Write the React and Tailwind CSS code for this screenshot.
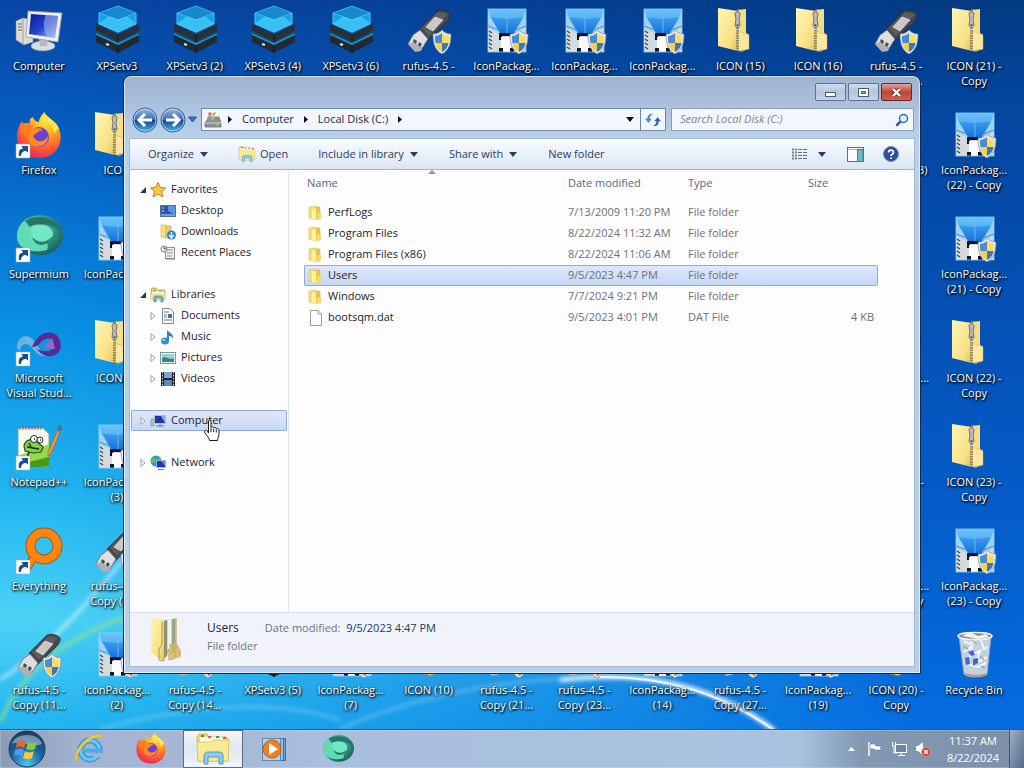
import React, { useState } from 'react';

// Gradients used by more than one icon
const SharedDefs = () => (
  <svg className="absolute size-0" aria-hidden="true">
    <defs>
      <linearGradient id="folder" x1="0" y1="0" x2="1" y2="1">
        <stop offset="0" stopColor="#fff6b4" />
        <stop offset="0.7" stopColor="#f8e186" />
        <stop offset="1" stopColor="#e2ba50" />
      </linearGradient>
      <linearGradient id="package" x1="0" y1="0" x2="0" y2="1">
        <stop offset="0" stopColor="#4fb6f8" />
        <stop offset="1" stopColor="#1672da" />
      </linearGradient>
      <radialGradient id="globe" cx="0.4" cy="0.35" r="0.7">
        <stop offset="0" stopColor="#8ff0d0" />
        <stop offset="0.5" stopColor="#2fa58e" />
        <stop offset="1" stopColor="#1d5a52" />
      </radialGradient>
      <radialGradient id="fox" cx="0.65" cy="0.15" r="0.95">
        <stop offset="0" stopColor="#fff04a" />
        <stop offset="0.4" stopColor="#ffa01e" />
        <stop offset="0.75" stopColor="#fb4a3c" />
        <stop offset="1" stopColor="#e0206a" />
      </radialGradient>
      <linearGradient id="navButton" x1="0" y1="0" x2="0" y2="1">
        <stop offset="0" stopColor="#9dbbe6" />
        <stop offset="0.48" stopColor="#3e6db5" />
        <stop offset="0.5" stopColor="#143f8e" />
        <stop offset="1" stopColor="#3fc0f0" />
      </linearGradient>
      <linearGradient id="screen" x1="0" y1="0" x2="1" y2="1">
        <stop offset="0" stopColor="#0a1c9c" />
        <stop offset="0.5" stopColor="#2440c8" />
        <stop offset="1" stopColor="#b4c8f8" />
      </linearGradient>
    </defs>
  </svg>
);

const Wallpaper = () => (
  <svg className="absolute inset-0 h-full w-full" viewBox="0 0 1024 729" preserveAspectRatio="none" aria-hidden="true">
    <defs>
      <linearGradient id="wallLeft" x1="0" y1="0" x2="0" y2="1">
        <stop offset="0" stopColor="#0845a4" />
        <stop offset="0.2" stopColor="#0660c2" />
        <stop offset="0.45" stopColor="#0a90e4" />
        <stop offset="0.68" stopColor="#22b6f0" />
        <stop offset="0.85" stopColor="#4cd2f6" />
        <stop offset="1" stopColor="#22b4f0" />
      </linearGradient>
      <linearGradient id="wallRight" x1="0" y1="0" x2="0" y2="1">
        <stop offset="0" stopColor="#033a82" />
        <stop offset="0.15" stopColor="#0446a0" />
        <stop offset="0.6" stopColor="#0458c2" />
        <stop offset="1" stopColor="#046ce0" />
      </linearGradient>
      <linearGradient id="fade" x1="0" y1="0" x2="1" y2="0">
        <stop offset="0.05" stopColor="#000" />
        <stop offset="0.5" stopColor="#777" />
        <stop offset="0.9" stopColor="#fff" />
      </linearGradient>
      <mask id="fadeMask">
        <rect width="1024" height="729" fill="url(#fade)" />
      </mask>
      <filter id="glow" x="-10%" y="-50%" width="120%" height="200%">
        <feGaussianBlur stdDeviation="2" />
      </filter>
    </defs>
    <rect width="1024" height="729" fill="url(#wallLeft)" />
    <rect width="1024" height="729" fill="url(#wallRight)" mask="url(#fadeMask)" />
    <g fill="none" filter="url(#glow)">
      <path d="M0 680Q60 640 126 556" stroke="#fff" strokeOpacity="0.6" strokeWidth="3" />
      <path d="M0 722Q30 650 126 617" stroke="#9be87c" strokeOpacity="0.8" strokeWidth="3" />
      <path d="M100 729Q250 690 340 720" stroke="#fff" strokeOpacity="0.25" strokeWidth="3" />
      <path d="M340 729Q450 680 600 677" stroke="#fff" strokeOpacity="0.4" strokeWidth="2" />
      <path d="M560 680Q690 664 775 731" stroke="#fff" strokeWidth="4" />
    </g>
    <path d="M600 677Q700 676 775 731" fill="none" stroke="#fff" strokeWidth="2" strokeOpacity="0.8" />
  </svg>
);

const Shield = () => (
  <g>
    <path d="M37 22C34 25 31 26 28 26C28 36 30 42 37 46C44 42 46 36 46 26C43 26 40 25 37 22Z" fill="#e4e8ee" stroke="#7c8894" strokeWidth="0.7" />
    <path d="M37 25C35 27 32 28 30 28C30 30 30 32 30.500 35H37Z" fill="#4a8ad0" />
    <path d="M37 25C39 27 42 28 44 28C44 30 44 32 43.500 35H37Z" fill="#fbdc62" />
    <path d="M30.500 35C31 39 33 42 37 44V35Z" fill="#fbcb40" />
    <path d="M43.500 35C43 39 41 42 37 44V35Z" fill="#3a78bc" />
  </g>
);

const Shortcut = () => (
  <g>
    <rect x="1" y="32" width="14" height="14" fill="#fff" stroke="#9aa8b8" strokeWidth="0.6" />
    <path d="M4 44C3 39 5 37 8 36.500L6.500 34H13V40.500L11 39C8 39 6 41 6 44Z" fill="#1c4d94" />
  </g>
);

const Fox = () => (
  <g>
    <path d="M2 24C2 18 4 13 7 9L9 14C11 12 13 11 15 11C14 8 15 6 18 5C19 8 21 10 24 10C24 6 27 3 29 0C31 6 40 9 44 17C49 29 43 45 25 46C10 46 2 36 2 24Z" fill="url(#fox)" />
    <circle cx="24" cy="25" r="10" fill="#7040d0" />
    <path d="M14 20C17 15 26 15 28 18C24 18 23 21 20 22C18 23 18 25 20 27C25 32 31 28 33 24C34 36 16 38 13 28Z" fill="#ff8a20" />
    <path d="M6 13C9 9 15 12 20 14C15 16 15 20 12 25C8 24 5 19 6 13Z" fill="#ff7f1c" />
    <path d="M29 0C28 7 38 10 39 22C42 16 44 17 44 17C42 9 32 6 29 0Z" fill="#ffe84a" />
  </g>
);

const Supermium = () => (
  <g>
    <ellipse cx="25" cy="19" rx="23" ry="20" fill="url(#globe)" />
    <path d="M2 22C1 10 10 3 14 3C10 12 18 22 27 24C32 26 34 28 32 34C15 38 3 32 2 22Z" fill="#5fdcb4" />
    <path d="M10 5C22 -3 43 1 48 17C38 8 22 6 15 11Z" fill="#2a7467" />
    <ellipse cx="27" cy="18" rx="11" ry="9" fill="#74e8c4" />
    <path d="M17 21Q27 31 38 20Q33 29 26 29Q19 28 17 21Z" fill="#27806f" />
  </g>
);

const DesktopIcon = ({ type }) => {
  const svgProps = { className: 'size-12 shrink-0 overflow-visible', viewBox: '0 0 48 48', 'aria-hidden': true };

  if (type === 'computer') {
    return (
      <svg {...svgProps}>
        <path d="M1 13L8 10L18 12V34L9 37L1 32Z" fill="#dcdcd8" stroke="#8c8c88" strokeWidth="0.6" />
        <path d="M8 10V36" stroke="#a0a09c" />
        <path d="M3 16H7M3 19H7M3 22H7" stroke="#6a6a6a" />
        <ellipse cx="28" cy="38" rx="12" ry="5" fill="#d8dbe0" stroke="#8c939c" strokeWidth="0.6" />
        <path d="M24 30H33L32 38H25Z" fill="#b4b9c2" />
        <path d="M13 3L47 5L43 34L11 29Z" fill="#f0f1ee" stroke="#94989c" strokeWidth="0.8" />
        <path d="M16 6L43 8L40 30L14 26Z" fill="url(#screen)" />
        <path d="M31 7L43 8L40 30L32 29C28 20 28 14 31 7Z" fill="#a5b8f4" fillOpacity="0.55" />
      </svg>
    );
  }
  if (type === 'xpset') {
    return (
      <svg {...svgProps}>
        <path d="M3 16L25 26L46 16V23L25 34L3 23Z" fill="#27313b" />
        <path d="M3 27L25 37L46 27V34L25 45L3 34Z" fill="#202a34" />
        <path d="M3 23L25 34L46 23V26L25 37L3 26Z" fill="#17506e" />
        <path d="M3 26L25 36L46 26" fill="none" stroke="#22a4d4" strokeWidth="1.2" />
        <path d="M25 26V34M25 38V45" stroke="#0e161e" />
        <path d="M6 5L25 -2L43 5V16L25 25L6 16Z" fill="#17a2e6" />
        <path d="M6 5L25 -2L43 5L25 12Z" fill="#1688cc" stroke="#3cc0ee" strokeWidth="0.8" />
        <path d="M6 16L16 9L25 12L34 9L43 16L25 24Z" fill="#38c0f6" stroke="#62d4f8" strokeWidth="0.6" />
        <path d="M6 5V16M43 5V16" stroke="#48c8f4" strokeWidth="1" />
        <path d="M13 36L16 37" stroke="#d8e8ee" strokeWidth="2" />
      </svg>
    );
  }
  if (type === 'rufus') {
    return (
      <svg {...svgProps}>
        <path d="M14 21L32 3C37 1 42 3 45 6C46 9 43 13 40 16L20 35Z" fill="#45474c" stroke="#292b2f" strokeWidth="0.8" />
        <path d="M17 20L33 4L43 6L24 28Z" fill="#5a5c61" />
        <path d="M21 19L30 9L38 12L28 23Z" fill="#c9c8c4" stroke="#f2f2f0" strokeWidth="0.6" />
        <path d="M8 27L15 22L23 31L16 42L10 42L3 36Z" fill="#dedfe0" stroke="#696b70" strokeWidth="0.8" />
        <path d="M3 36L8 34L17 39L16 43L10 44Z" fill="#aeb2b6" />
        <path d="M9 31L12 33L11 36L8 34ZM14 34L17 36L15 39L13 37Z" fill="#484b52" />
        <Shield />
      </svg>
    );
  }
  if (type === 'package') {
    return (
      <svg {...svgProps}>
        <rect x="6" y="1" width="38" height="43" fill="#d5dade" />
        <path d="M6 1H44V20L33 26H18L6 20Z" fill="#9ed2f8" />
        <path d="M6 1H44L41 10L32 25H18L9 10Z" fill="url(#package)" />
        <path d="M6 1H44V9L25 11L6 9Z" fill="#8fd4fc" fillOpacity="0.4" />
        <path d="M25 2V25" stroke="#6fc0f6" strokeWidth="0.8" />
        <path d="M6 18L17 22M44 18L33 22" stroke="#5a88b4" strokeWidth="1" />
        <path d="M17 25H33V32H29V28H20V32H17Z" fill="#0c1420" />
        <path d="M19 29H29V44H19Z" fill="#fbfbfb" />
        <path d="M17 40H21V44H17ZM28 40H32V44H28Z" fill="#121922" />
        <path d="M7 23L10 25M7 27L10 29M7 31L10 33M7 35L10 37M7 39L10 41" stroke="#3c444c" strokeWidth="1.3" />
        <rect x="6" y="1" width="38" height="43" fill="none" stroke="#8fd0f6" strokeWidth="0.8" />
        <Shield />
      </svg>
    );
  }
  if (type === 'zip') {
    return (
      <svg {...svgProps}>
        <path d="M4 38L26 44L32 41V26L29 24V3L22 1Z" fill="#d9b860" fillOpacity="0.7" />
        <path d="M2 0L22 3V43L2 38Z" fill="url(#folder)" />
        <path d="M22 2L30 1V25L33 27V41L22 43Z" fill="#f6de86" />
        <path d="M22 23L33 27V41L22 43Z" fill="#fbe8a0" stroke="#d6ac40" strokeWidth="0.5" />
        <path d="M21.500 2V43" stroke="#8a8468" strokeWidth="3" strokeDasharray="1.500 1" />
        <path d="M19 6C19 3 24 3 24 6L23 11L24 17C24 20 19 20 19 17L20 11Z" fill="#b9bcc0" stroke="#54575c" strokeWidth="0.8" />
        <circle cx="21.500" cy="17" r="1" fill="#4b4e54" />
      </svg>
    );
  }
  if (type === 'firefox') {
    return (
      <svg {...svgProps}>
        <Fox />
        <Shortcut />
      </svg>
    );
  }
  if (type === 'supermium') {
    return (
      <svg {...svgProps}>
        <Supermium />
        <Shortcut />
      </svg>
    );
  }
  if (type === 'visualstudio') {
    return (
      <svg {...svgProps}>
        <path d="M2 25C4 15 14 13 20 22C26 32 30 35 36 34C26 39 22 34 18 29C13 22 6 22 5 31C3 30 1 28 2 25Z" fill="#6eb2e0" />
        <path d="M17 27C22 15 30 11 38 13C47 16 49 31 40 35C33 38 26 35 22 29C28 32 38 33 39 25C39 17 30 17 26 22C23 26 20 27 17 27Z" fill="#5a2a94" />
        <path d="M27 28L37 18L40 29Z" fill="#8b6cc4" />
        <Shortcut />
      </svg>
    );
  }
  if (type === 'notepad') {
    return (
      <svg {...svgProps}>
        <path d="M3 4H28L34 10V42L3 45Z" fill="#f6f8f4" stroke="#8c9484" strokeWidth="0.8" />
        <path d="M3 32L34 20V42L3 45Z" fill="#9ad848" />
        <path d="M14 38L34 33V42L14 44Z" fill="#429a1c" />
        <path d="M5 2V6M8 2V6M11 2V6M14 2V6M17 2V6M20 2V6M23 2V6M26 2V6" stroke="#6a6f68" strokeWidth="1" />
        <path d="M9 22C10 16 16 14 21 17L28 23L26 28L18 29L10 27Z" fill="#84d048" stroke="#25521a" strokeWidth="1.2" />
        <circle cx="19" cy="15" r="3.500" fill="#fff" stroke="#222" />
        <circle cx="25" cy="16" r="3" fill="#fff" stroke="#222" />
        <path d="M19 15H20M25 16H26M12 23L24 25M14 19L16 23M14 28L12 34" stroke="#1e2c16" strokeWidth="1.5" />
        <path d="M45 1L47 3L36 30L33 32L33 28Z" fill="#ec9b3c" stroke="#8c5a24" strokeWidth="0.6" />
        <path d="M44 1L47 3L45 8L42 6Z" fill="#556c90" />
        <Shortcut />
      </svg>
    );
  }
  if (type === 'everything') {
    return (
      <svg {...svgProps}>
        <path d="M12 40L19 29" stroke="#9c5010" strokeWidth="8" strokeLinecap="round" />
        <circle cx="29" cy="18" r="13.500" fill="none" stroke="#a45a18" strokeWidth="10" />
        <circle cx="29" cy="18" r="13.500" fill="none" stroke="#ff8410" strokeWidth="8" />
        <path d="M13 39L18 31" stroke="#ff8410" strokeWidth="6" />
        <Shortcut />
      </svg>
    );
  }
  return (
    <svg {...svgProps}>
      <path d="M9 4L41 4L37 42C33 46 17 46 14 42Z" fill="#d3dae1" fillOpacity="0.92" stroke="#a8b2bb" strokeWidth="0.8" />
      <path d="M14 20L22 14L20 24L30 19L26 31L37 25M17 32L28 35L36 31M31 8L34 17L38 15M14 9L20 12L27 6" fill="none" stroke="#f4f6f8" strokeWidth="2" />
      <path d="M13 14L18 17M30 24L34 28M22 8L27 12M31 34L35 36" stroke="#a2acb5" strokeWidth="1.5" />
      <ellipse cx="25" cy="4" rx="17" ry="3.500" fill="#7d8993" stroke="#eef2f5" strokeWidth="1.5" />
      <path d="M12 4L20 0L28 4L36 2L39 5L28 7Z" fill="#f2f0ea" />
      <path d="M18 20L23 18L25 23L21 24ZM15 26L19 25L20 32L16 33ZM23 27L28 26L28 31L23 34Z" fill="#4765c8" />
      <path d="M15 42Q25 46 37 42" fill="none" stroke="#b49a82" strokeWidth="2" />
    </svg>
  );
};

const firstColumn = [
  { type: 'computer', lines: ['Computer'] },
  { type: 'firefox', lines: ['Firefox'] },
  { type: 'supermium', lines: ['Supermium'] },
  { type: 'visualstudio', lines: ['Microsoft', 'Visual Stud...'] },
  { type: 'notepad', lines: ['Notepad++'] },
  { type: 'everything', lines: ['Everything'] },
  { type: 'rufus', lines: ['rufus-4.5 -', 'Copy (11...'] },
];

const secondColumn = [
  { type: 'xpset', lines: ['XPSetv3'] },
  { type: 'zip', lines: ['ICON'] },
  { type: 'package', lines: ['IconPackag...'] },
  { type: 'zip', lines: ['ICON (2)'] },
  { type: 'package', lines: ['IconPackag...', '(3)'] },
  { type: 'rufus', lines: ['rufus-4.5 -', 'Copy (10...'] },
  { type: 'package', lines: ['IconPackag...', '(2)'] },
];

// Columns whose middle rows are empty: one icon on top and one at the bottom
const middleColumns = [
  [{ type: 'xpset', lines: ['XPSetv3 (2)'] }, { type: 'rufus', lines: ['rufus-4.5 -', 'Copy (14...'] }],
  [{ type: 'xpset', lines: ['XPSetv3 (4)'] }, { type: 'xpset', lines: ['XPSetv3 (5)'] }],
  [{ type: 'xpset', lines: ['XPSetv3 (6)'] }, { type: 'package', lines: ['IconPackag...', '(7)'] }],
  [{ type: 'rufus', lines: ['rufus-4.5 -'] }, { type: 'zip', lines: ['ICON (10)'] }],
  [{ type: 'package', lines: ['IconPackag...'] }, { type: 'rufus', lines: ['rufus-4.5 -', 'Copy (21...'] }],
  [{ type: 'package', lines: ['IconPackag...'] }, { type: 'rufus', lines: ['rufus-4.5 -', 'Copy (23...'] }],
  [{ type: 'package', lines: ['IconPackag...'] }, { type: 'package', lines: ['IconPackag...', '(14)'] }],
  [{ type: 'zip', lines: ['ICON (15)'] }, { type: 'rufus', lines: ['rufus-4.5 -', 'Copy (27...'] }],
  [{ type: 'zip', lines: ['ICON (16)'] }, { type: 'package', lines: ['IconPackag...', '(19)'] }],
];

const twelfthColumn = [
  { type: 'rufus', lines: ['rufus-4.5 -', 'Copy (29...'] },
  { type: 'xpset', lines: ['XPSetv3 (13)'] },
  null,
  { type: 'package', lines: ['IconPackag...'] },
  { type: 'zip', lines: ['ICON (19) -', 'Copy'] },
  { type: 'package', lines: ['IconPackag...', '(20) - Copy'] },
  { type: 'zip', lines: ['ICON (20) -', 'Copy'] },
];

const lastColumn = [
  { type: 'zip', lines: ['ICON (21) -', 'Copy'] },
  { type: 'package', lines: ['IconPackag...', '(22) - Copy'] },
  { type: 'package', lines: ['IconPackag...', '(21) - Copy'] },
  { type: 'zip', lines: ['ICON (22) -', 'Copy'] },
  { type: 'zip', lines: ['ICON (23) -', 'Copy'] },
  { type: 'package', lines: ['IconPackag...', '(23) - Copy'] },
  { type: 'recycle', lines: ['Recycle Bin'] },
];

const desktopColumns = [
  firstColumn,
  secondColumn,
  ...middleColumns.map(([top, bottom]) => [top, null, null, null, null, null, bottom]),
  twelfthColumn,
  lastColumn,
];

const Desktop = () => (
  <div className="relative grid grid-cols-13 pr-[11px]">
    {desktopColumns.map((column, i) => (
      <div key={i} className="flex min-w-0 flex-col">
        {column.map((item, j) => (
          <div key={j} className="flex h-[104px] flex-col items-center gap-0.5 pt-2">
            {item && (
              <>
                <DesktopIcon type={item.type} />
                <span className="text-center leading-[15px] whitespace-nowrap text-white [text-shadow:1px_1px_2px_#000,0_1px_3px_#000]">
                  {item.lines.map((line) => (
                    <span key={line} className="block">{line}</span>
                  ))}
                </span>
              </>
            )}
          </div>
        ))}
      </div>
    ))}
  </div>
);

const SmallFolder = () => (
  <svg className="size-4" viewBox="0 0 16 16" aria-hidden="true">
    <path d="M1 2L8 1V15L1 13Z" fill="#f5e06c" stroke="#dcc058" strokeWidth="0.6" />
    <path d="M8 2H12V14H8Z" fill="#e6c850" stroke="#cfae44" strokeWidth="0.5" />
    <path d="M4 4L8 3V15L4 14Z" fill="#fdf2a4" />
    <path d="M9 8H13V14L8 15Z" fill="#f2da6c" />
  </svg>
);

const FileIcon = () => (
  <svg className="size-4" viewBox="0 0 16 16" aria-hidden="true">
    <path d="M2.500 0.500H10L13.500 4V15.500H2.500Z" fill="#fdfdfd" stroke="#a0a0a0" />
    <path d="M10 0.500V4H13.500" fill="#eee" stroke="#a0a0a0" />
  </svg>
);

const ExplorerIcon = ({ className }) => (
  <svg className={className} viewBox="0 0 36 32" aria-hidden="true">
    <path d="M2 4L4 1H12L14 4H31L33 6V28H3Z" fill="#f0d878" stroke="#cda848" strokeWidth="0.8" />
    <path d="M5 4H31V10H5Z" fill="#fafbf0" />
    <path d="M6 3H9M21 4H24" stroke="#36a052" strokeWidth="2" />
    <path d="M13 4H16M28 5H31" stroke="#e0523a" strokeWidth="2" />
    <path d="M2 9H16L18 7H34L33 28H3Z" fill="#f8eb94" stroke="#d8b858" strokeWidth="0.6" />
    <path d="M9 31V23C9 20 11 19 13 19H24C27 19 28 20 28 23V31H24V24H13V31Z" fill="#8cccf0" stroke="#3f86bc" strokeWidth="0.8" />
  </svg>
);

const navIcons = {
  star: <path d="M8 0.500L10.300 5.500L15.500 6L11.500 9.500L13 15L8 12L3 15L4.500 9.500L0.500 6L5.700 5.500Z" fill="#ffc93c" stroke="#cf7d18" />,
  desktop: (
    <>
      <rect x="0.500" y="2.500" width="15" height="11" fill="#2258b4" stroke="#54709c" />
      <path d="M8 3L15 3V12L8 8Z" fill="#5b94dc" />
      <path d="M2 5H4M2 8H4M1 12H15" stroke="#c8dcf4" />
    </>
  ),
  downloads: (
    <>
      <path d="M1 1H6V14L1 13Z" fill="#f7e28a" stroke="#d0ac48" strokeWidth="0.6" />
      <path d="M6 2H11V14H6Z" fill="#efcf68" stroke="#d0ac48" strokeWidth="0.6" />
      <circle cx="11.500" cy="11" r="4.500" fill="#2d7fd0" />
      <path d="M11.500 8V13M9 11L11.500 14L14 11" fill="none" stroke="#d5efff" strokeWidth="1.5" />
    </>
  ),
  recent: (
    <>
      <rect x="5.500" y="2.500" width="9" height="11" fill="#eef0f2" stroke="#8b9096" />
      <path d="M7 5H13M7 8H13M7 11H12" stroke="#8b9096" />
      <circle cx="4" cy="4" r="3" fill="#f4f4f4" stroke="#7a8088" />
      <path d="M4 2V4H6M6 14H15" stroke="#7a8088" />
    </>
  ),
  libraries: (
    <>
      <path d="M1 3L2 1H6L7 3H15V13H1Z" fill="#e8cc68" stroke="#b89a48" strokeWidth="0.7" />
      <path d="M2 4H14V7H2Z" fill="#e9f4e6" />
      <path d="M3 4H6M9 4H12" stroke="#5cb06c" />
      <path d="M1 7H15V13H1Z" fill="#f3df90" />
      <path d="M4 15V11C4 9 5 9 6 9H11C12 9 13 10 13 11V15H11V11H6V15Z" fill="#70b8e4" stroke="#3a7cae" strokeWidth="0.6" />
    </>
  ),
  documents: (
    <>
      <path d="M2.500 0.500H10L13.500 4V15.500H2.500Z" fill="#fdfdfd" stroke="#7f8790" />
      <path d="M4 4H9M4 7H7M4 9H7M4 12H12" stroke="#5f7894" />
      <rect x="8" y="6" width="4" height="4" fill="#4c6c94" />
    </>
  ),
  music: (
    <>
      <ellipse cx="5" cy="12" rx="4" ry="3.500" fill="#2a94d8" />
      <path d="M7 1C9 4 14 4 13 10C12 7 10 7 9 7V12H7Z" fill="#2f86c4" />
      <ellipse cx="4" cy="11" rx="1.500" ry="1" fill="#a6dcf8" />
    </>
  ),
  pictures: (
    <>
      <rect x="0.500" y="2.500" width="15" height="11" fill="#f6f8f8" stroke="#84909a" />
      <path d="M2 4H14V12H2Z" fill="#8fd4dc" />
      <path d="M2 8C6 5 9 11 14 8V12H2Z" fill="#32867c" />
    </>
  ),
  videos: (
    <>
      <rect x="1" y="1" width="14" height="14" fill="#20252d" />
      <rect x="4" y="1" width="8" height="6" fill="#7ba6d4" />
      <rect x="4" y="9" width="8" height="6" fill="#5d88bc" />
      <path d="M2.500 1V15M13.500 1V15" stroke="#d8dde4" strokeDasharray="1.500 1.500" />
    </>
  ),
  computer: (
    <>
      <path d="M1 6H4V13H1Z" fill="#b7c6ae" stroke="#76856c" strokeWidth="0.5" />
      <rect x="4.500" y="2.500" width="11" height="8" fill="#1c34a8" stroke="#b6bcc8" />
      <path d="M11 3H15V10Z" fill="#8ea4ec" />
      <path d="M6 13H14M10 11V13" stroke="#8a93a2" strokeWidth="1.500" />
    </>
  ),
  network: (
    <>
      <circle cx="6" cy="6" r="5.500" fill="#2b9ccc" />
      <path d="M3 2C6 3 7 5 5 7S2 8 1 6ZM8 1L11 4L9 6Z" fill="#4cc47c" />
      <rect x="6.500" y="5.500" width="9" height="7" fill="#1c34b8" stroke="#a8b2cc" />
      <path d="M11 6H15V11Z" fill="#6c86e4" />
      <path d="M8 14.500H14" stroke="#7a86a0" />
    </>
  ),
};

const NavIcon = ({ name }) => (
  <svg className="size-4 shrink-0" viewBox="0 0 16 16" aria-hidden="true">{navIcons[name]}</svg>
);

const navGroups = [
  { label: 'Favorites', icon: 'star', open: true, items: [
    { label: 'Desktop', icon: 'desktop' },
    { label: 'Downloads', icon: 'downloads' },
    { label: 'Recent Places', icon: 'recent' },
  ] },
  { label: 'Libraries', icon: 'libraries', open: true, items: [
    { label: 'Documents', icon: 'documents', expandable: true },
    { label: 'Music', icon: 'music', expandable: true },
    { label: 'Pictures', icon: 'pictures', expandable: true },
    { label: 'Videos', icon: 'videos', expandable: true },
  ] },
  { label: 'Computer', icon: 'computer', items: [] },
  { label: 'Network', icon: 'network', items: [] },
];

const Expander = ({ open }) => (
  <svg className="size-2 shrink-0" viewBox="0 0 8 8" aria-hidden="true">
    {open ? <path d="M7 1V7H1Z" fill="#333" /> : <path d="M2 0.500L6 4L2 7.500Z" fill="#fff" stroke="#a0a0a0" />}
  </svg>
);

const Sidebar = ({ active, onSelect }) => (
  <nav className="flex w-[159px] shrink-0 flex-col gap-[21px] border-r border-[#dbe6f3] bg-[#fdfdfe] pt-[9px] pr-px pl-px">
    {navGroups.map((group) => (
      <div key={group.label}>
        <button
          type="button"
          onClick={() => onSelect(group.label)}
          className={`flex h-[21px] w-full items-center rounded-xs border pl-[7px] ${
            active === group.label ? 'border-[#8fabd6] bg-linear-to-b from-[#dfe8fb] to-[#c8d8f7]' : 'border-transparent'
          }`}
        >
          <Expander open={group.open} />
          <span className="ml-[3px] flex items-center gap-[5px]">
            <NavIcon name={group.icon} />
            {group.label}
          </span>
        </button>
        {group.items.map((item) => (
          <button key={item.label} type="button" className="flex h-[21px] w-full items-center pl-[18px]">
            {item.expandable ? <Expander /> : <span className="size-2" />}
            <span className="ml-[3px] flex items-center gap-[5px]">
              <NavIcon name={item.icon} />
              {item.label}
            </span>
          </button>
        ))}
      </div>
    ))}
  </nav>
);

const files = [
  { name: 'PerfLogs', date: '7/13/2009 11:20 PM', type: 'File folder', size: '' },
  { name: 'Program Files', date: '8/22/2024 11:32 AM', type: 'File folder', size: '' },
  { name: 'Program Files (x86)', date: '8/22/2024 11:06 AM', type: 'File folder', size: '' },
  { name: 'Users', date: '9/5/2023 4:47 PM', type: 'File folder', size: '' },
  { name: 'Windows', date: '7/7/2024 9:21 PM', type: 'File folder', size: '' },
  { name: 'bootsqm.dat', date: '9/5/2023 4:01 PM', type: 'DAT File', size: '4 KB' },
];

const FileList = ({ selected, onSelect }) => (
  <div className="relative min-w-0 flex-1 bg-[#fdfdfe] pl-[15px]">
    <svg className="absolute top-0 left-[139px] h-1 w-2" viewBox="0 0 8 4" aria-hidden="true">
      <path d="M0 4L4 0L8 4Z" fill="#8794a4" />
    </svg>
    <table className="w-[574px] table-fixed border-separate border-spacing-0 text-left text-[#707070]">
      <thead>
        <tr className="h-8 align-top text-[#5c6678]">
          <th className="w-[256px] pt-[5px] pl-[3px] font-normal">Name</th>
          <th className="w-[120px] pt-[5px] pl-2 font-normal">Date modified</th>
          <th className="w-[120px] pt-[5px] pl-2 font-normal">Type</th>
          <th className="pt-[5px] pl-2 font-normal">Size</th>
        </tr>
      </thead>
      <tbody>
        {files.map((file) => {
          const cell = file.name === selected
            ? 'border-y border-[#8fabd6] bg-linear-to-b from-[#dfe8fb] to-[#c4d8f8]'
            : 'border-y border-transparent';
          return (
            <tr key={file.name} className="h-[21px]" onClick={() => onSelect(file.name)}>
              <td className={`rounded-l-xs border-l p-0 pl-[3px] ${cell}`}>
                <span className="flex items-center gap-1 text-[#1e1e1e]">
                  {file.type === 'File folder' ? <SmallFolder /> : <FileIcon />}
                  {file.name}
                </span>
              </td>
              <td className={`p-0 pl-2 whitespace-nowrap ${cell}`}>{file.date}</td>
              <td className={`p-0 pl-2 ${cell}`}>{file.type}</td>
              <td className={`rounded-r-xs border-r p-0 pr-[3px] text-right ${cell}`}>{file.size}</td>
            </tr>
          );
        })}
      </tbody>
    </table>
  </div>
);

const Caret = ({ className }) => (
  <svg className={`h-[5px] w-2 ${className || ''}`} viewBox="0 0 8 5" aria-hidden="true">
    <path d="M0 0H8L4 5Z" fill="currentColor" />
  </svg>
);

const Chevron = () => (
  <svg className="h-[7px] w-1" viewBox="0 0 4 7" aria-hidden="true">
    <path d="M0 0V7L4 3.500Z" fill="#111" />
  </svg>
);

const AddressBar = () => (
  <div className="flex h-[30px] items-start pr-px pl-[3px]">
    <div className="flex h-[23px] items-center">
      <button type="button" aria-label="Back">
        <svg className="size-[26px]" viewBox="0 0 26 26">
          <circle cx="13" cy="13" r="12" fill="url(#navButton)" stroke="#32598f" />
          <circle cx="13" cy="13" r="11" fill="none" stroke="#dcecff" strokeOpacity="0.7" />
          <path d="M20 13H8M13 7L7 13L13 19" fill="none" stroke="#fff" strokeWidth="3" />
        </svg>
      </button>
      <button type="button" aria-label="Forward" className="ml-0.5">
        <svg className="size-[26px]" viewBox="0 0 26 26">
          <circle cx="13" cy="13" r="12" fill="url(#navButton)" stroke="#32598f" />
          <circle cx="13" cy="13" r="11" fill="none" stroke="#dcecff" strokeOpacity="0.7" />
          <path d="M6 13H18M13 7L19 13L13 19" fill="none" stroke="#fff" strokeWidth="3" />
        </svg>
      </button>
      <button type="button" aria-label="Recent pages" className="mr-1 ml-0.5">
        <svg className="h-[7px] w-[9px]" viewBox="0 0 9 7">
          <path d="M0.500 1H8.500L4.500 6Z" fill="#2a7cc0" stroke="#31547e" />
        </svg>
      </button>
    </div>
    <div className="flex h-[23px] min-w-0 flex-1 items-center border border-[#7488a8] bg-[#f2f6fe]">
      <svg className="mx-[2px] size-[18px] shrink-0" viewBox="0 0 18 18" aria-hidden="true">
        <path d="M3 9L5 6H15L17 12V16H1V12Z" fill="#8c9299" stroke="#5f656c" strokeWidth="0.7" />
        <path d="M1 12H17" stroke="#cfd4d8" />
        <path d="M12 14H15" stroke="#6fe05c" strokeWidth="1.5" />
        <path d="M5 1L8 2L7 5L4 4Z" fill="#e0783c" />
        <path d="M9 2L12 1L11 4L8 5Z" fill="#a4b838" />
        <path d="M4 5L7 6L6 9L3 8Z" fill="#6aa2c8" />
        <path d="M8 6L11 5L10 8L7 9Z" fill="#f4c030" />
      </svg>
      <span className="ml-1 flex items-center gap-[10px] text-[#1d2b45]">
        <Chevron />
        <a href="#computer">Computer</a>
        <Chevron />
        <a href="#c">Local Disk (C:)</a>
        <Chevron />
      </span>
      <button type="button" aria-label="Previous locations" className="ml-auto flex h-full items-center px-[6px] text-[#111]">
        <Caret />
      </button>
      <button type="button" aria-label="Refresh" className="flex h-full w-[25px] items-center justify-center border-l border-[#7488a8]">
        <svg className="size-4" viewBox="0 0 14 14">
          <path d="M0 6L3 9.500L6 6H4C4 4 5 3 7 2C4 1 2 3 2 6Z" fill="#3c8fc4" />
          <path d="M14 8L11 4.500L8 8H10C10 10 9 11 7 12C10 13 12 11 12 8Z" fill="#2f62a4" />
        </svg>
      </button>
    </div>
    <div className="ml-[5px] flex h-[23px] w-[243px] items-center border border-[#8a9cb8] bg-[#f2f6fe] pr-1 pl-2">
      <input
        type="text"
        aria-label="Search"
        placeholder="Search Local Disk (C:)"
        className="min-w-0 flex-1 italic outline-none placeholder:text-[#7c828c]"
      />
      <svg className="size-[14px]" viewBox="0 0 14 14" aria-hidden="true">
        <path d="M2 12L6 8" stroke="#3c5a94" strokeWidth="2.500" strokeLinecap="round" />
        <circle cx="8.500" cy="5.500" r="4" fill="#e4f0fc" stroke="#3b68ac" strokeWidth="1.500" />
      </svg>
    </div>
  </div>
);

const Toolbar = () => (
  <div className="flex h-[31px] shrink-0 items-center border-b border-[#a9b6ca] bg-linear-to-b from-[#fafcff] via-[#eaf1fb] via-50% to-[#dbe5f3] text-[#2c3d5c]">
    <button type="button" className="ml-[18px] flex items-center gap-[6px]">Organize <Caret /></button>
    <button type="button" className="ml-[30px] flex items-center gap-1">
      <ExplorerIcon className="h-4 w-[18px]" />
      Open
    </button>
    <button type="button" className="ml-[30px] flex items-center gap-[6px]">Include in library <Caret /></button>
    <button type="button" className="ml-[31px] flex items-center gap-[6px]">Share with <Caret /></button>
    <button type="button" className="ml-[31px]">New folder</button>
    <button type="button" aria-label="Change your view" className="ml-auto flex items-center gap-[11px]">
      <svg className="h-[13px] w-[15px]" viewBox="0 0 15 13">
        <path d="M0 1.500H5M0 4.500H5M0 7.500H5M0 10.500H5" stroke="#7a8494" strokeDasharray="2 1" strokeWidth="2" />
        <path d="M6 1.500H15M6 4.500H15M6 7.500H15M6 10.500H15" stroke="#5f6b7e" strokeDasharray="4 1" />
      </svg>
      <Caret />
    </button>
    <button type="button" aria-label="Show the preview pane" className="ml-[21px]">
      <svg className="h-[15px] w-[17px]" viewBox="0 0 17 15">
        <rect x="0.500" y="0.500" width="16" height="14" fill="#fff" stroke="#54708c" />
        <path d="M1 2.500H16" stroke="#9cb4c8" />
        <rect x="10.500" y="2.500" width="5.500" height="12" fill="#67bcc8" stroke="#3f7c94" />
      </svg>
    </button>
    <button type="button" aria-label="Help" className="mr-[15px] ml-[19px]">
      <svg className="size-4" viewBox="0 0 16 16">
        <circle cx="8" cy="8" r="7.500" fill="#2c4f9e" stroke="#7b8fb8" />
        <path d="M5.500 6.500C5.500 3.500 10.500 3.500 10.500 6.200C10.500 8 8 8 8 10M8 11.500V13" fill="none" stroke="#fff" strokeWidth="1.700" />
      </svg>
    </button>
  </div>
);

const TitleBar = () => (
  <div className="flex h-8 items-start justify-end gap-0.5 pt-[7px] pr-[3px]">
    <button type="button" aria-label="Minimize" className="flex h-[18px] w-[31px] items-center justify-center rounded-xs border border-[#5f7390] bg-linear-to-b from-[#cfdbea] via-[#b3c5dc] to-[#c3d5ea] pt-1">
      <svg className="h-[5px] w-[11px]" viewBox="0 0 11 5">
        <rect x="0.500" y="0.500" width="10" height="4" fill="#fff" stroke="#4d5c72" />
      </svg>
    </button>
    <button type="button" aria-label="Maximize" className="flex h-[18px] w-[31px] items-center justify-center rounded-xs border border-[#5f7390] bg-linear-to-b from-[#cfdbea] via-[#b3c5dc] to-[#c3d5ea]">
      <svg className="h-[9px] w-[11px]" viewBox="0 0 11 9">
        <rect x="0.500" y="0.500" width="10" height="8" fill="#fff" stroke="#4d5c72" />
        <rect x="3.500" y="3.500" width="4" height="2" fill="#a7b8ce" stroke="#4d5c72" />
      </svg>
    </button>
    <button type="button" aria-label="Close" className="flex h-[18px] w-[31px] items-center justify-center rounded-xs border border-[#6a2530] bg-linear-to-b from-[#e0a29c] via-[#c04438] to-[#cf6054]">
      <svg className="h-[9px] w-[11px]" viewBox="0 0 11 9">
        <path d="M2 1L9 8M9 1L2 8" stroke="#6b2a2a" strokeWidth="4" />
        <path d="M2 1L9 8M9 1L2 8" stroke="#fff" strokeWidth="2.400" />
      </svg>
    </button>
  </div>
);

const DetailsPane = ({ file }) => (
  <div className="flex h-[54px] shrink-0 items-start border-t border-[#d5dde9] bg-linear-to-b from-[#eff4fa] to-[#f3f3fa] pl-5">
    <svg className="mt-[3px] h-[46px] w-8 shrink-0" viewBox="0 0 32 46" aria-hidden="true">
      <path d="M1 1L14 4V45L4 39C1 37 1 36 1 34Z" fill="url(#folder)" />
      <path d="M12 5L26 2V30L15 42Z" fill="#e8d28c" />
      <path d="M14 5L17 4V40L14 42Z" fill="#8c9476" />
      <path d="M18 4L21 3V38L18 40Z" fill="#f4f4ee" />
      <path d="M22 3L25 3V36L22 38Z" fill="#9aa68c" />
      <path d="M12 6V28L9 33V44L13 45L19 33V44L25 42L26 30L30 40V34L26 28V2" fill="none" stroke="#b9953c" strokeWidth="1" />
      <path d="M19 28L26 27L31 41L20 44Z" fill="#d4b458" fillOpacity="0.8" />
    </svg>
    <div className="mt-[6px] ml-[25px] leading-[18px]">
      <div className="flex gap-[26px]">
        <span className="text-xs leading-[18px] text-[#1e2333]">{file.name}</span>
        <span className="text-[#1e395b]">
          <span className="text-[#6a7484]">Date modified:</span>&nbsp; {file.date}
        </span>
      </div>
      <div className="text-[#6a7484]">{file.type}</div>
    </div>
  </div>
);

const ExplorerWindow = () => {
  const [selected, setSelected] = useState('Users');
  const [place, setPlace] = useState('Computer');

  return (
    <section
      aria-label="Local Disk (C:)"
      className="absolute top-[75px] right-[103px] bottom-[55px] left-[123px] flex flex-col rounded-t-lg border border-[#142a48] bg-linear-to-b from-[#9db2cf] via-[#b9d0ea] via-10% to-[#b9cfe8] px-[5px] pb-[6px] inset-ring inset-ring-white/60"
    >
      <TitleBar />
      <AddressBar />
      <div className="flex min-h-0 flex-1 flex-col border border-[#a4b7cf] bg-white">
        <Toolbar />
        <div className="flex min-h-0 flex-1">
          <Sidebar active={place} onSelect={setPlace} />
          <FileList selected={selected} onSelect={setSelected} />
        </div>
        <DetailsPane file={files.find((f) => f.name === selected)} />
      </div>
    </section>
  );
};

const HandCursor = () => (
  <svg className="absolute top-[419px] left-[203px] h-[23px] w-[18px]" viewBox="0 0 18 23" aria-hidden="true">
    <path
      d="M5.500 2C5.500 0.500 8 0.500 8 2V8.500C8.500 7.500 10.500 7.500 10.700 9C11.500 8 13.300 8.500 13.300 10C14.500 9.200 16 10 16 11.500V15C16 18 14.500 18.500 14.500 21.500H6.500C6 18.500 4 17 2 14C0.500 11.500 3 10.500 4 12L5.500 14Z"
      fill="#fff"
      stroke="#1b1b1b"
    />
    <path d="M8 9V13M10.700 10V13M13.300 11V13.500" stroke="#1b1b1b" />
  </svg>
);

const Taskbar = () => (
  <footer className="relative flex h-[39px] shrink-0 items-stretch border-t border-[#315a86] bg-[linear-gradient(to_right,#8c9cb8,#a3b2d0_8%,#a9bfdd_32%,#a9c2de_78%,#8399b3_84%,#7d90aa)] text-white inset-ring inset-ring-white/20">
    <button type="button" aria-label="Start" className="flex w-[58px] items-center pl-2">
      <svg className="size-[38px]" viewBox="0 0 38 38">
        <defs>
          <radialGradient id="orb" cx="0.5" cy="0.9" r="0.9">
            <stop offset="0" stopColor="#49c8f0" />
            <stop offset="0.5" stopColor="#1c64a0" />
            <stop offset="1" stopColor="#173c64" />
          </radialGradient>
        </defs>
        <circle cx="19" cy="19" r="18" fill="url(#orb)" stroke="#1b3a5c" />
        <path d="M4 14C7 2 31 2 34 14C26 18 12 10 4 14Z" fill="#fff" fillOpacity="0.4" />
        <path d="M9 12C12 10 15 10 18 12L16 18C13 16 11 16 8 18Z" fill="#ec6428" />
        <path d="M20 12C23 14 26 14 29 12L27 19C24 21 21 20 18 19Z" fill="#8cc63c" />
        <path d="M7 20C10 18 13 18 16 20L14 27C11 25 9 25 6 26Z" fill="#4a9ce8" />
        <path d="M17 21C20 23 23 23 26 21L24 28C21 30 18 29 15 28Z" fill="#fbcc38" />
      </svg>
    </button>
    <button type="button" aria-label="Internet Explorer" className="flex w-[62px] items-center justify-center">
      <svg className="size-8" viewBox="0 0 32 32">
        <circle cx="17" cy="17" r="9.500" fill="none" stroke="#2f9cdc" strokeWidth="6" />
        <circle cx="17" cy="17" r="9.500" fill="none" stroke="#6cc8f4" strokeWidth="3" />
        <path d="M10 17.500H29" stroke="#45b0ea" strokeWidth="4" />
        <path d="M20 20H31V24L26 24H20Z" fill="#a2b2d0" />
        <path d="M4 29C-2 26 6 10 17 4C24 0 30 1 29 6C28 3 22 4 17 7C8 13 3 22 4 29Z" fill="#f6cf38" stroke="#d6a41c" strokeWidth="0.5" />
      </svg>
    </button>
    <button type="button" aria-label="Firefox" className="flex w-[62px] items-center justify-center">
      <svg className="size-8" viewBox="0 0 48 48"><Fox /></svg>
    </button>
    <button type="button" aria-label="Windows Explorer" className="ml-px flex w-[60px] items-center justify-center border border-[#5e6c80] bg-linear-to-b from-[#f4f7fa] via-[#dfe6f0] to-[#f1f5fb]">
      <ExplorerIcon className="h-8 w-9" />
    </button>
    <button type="button" aria-label="Windows Media Player" className="flex w-[62px] items-center justify-center">
      <svg className="size-7" viewBox="0 0 28 28">
        <rect x="9.500" y="3.500" width="16" height="22" fill="#6ba4d4" stroke="#3c70a4" />
        <rect x="5.500" y="3.500" width="18" height="22" fill="#93c0e4" stroke="#3c70a4" />
        <rect x="2.500" y="3.500" width="18" height="22" fill="#b5cfe8" stroke="#5888b4" />
        <circle cx="12" cy="14" r="9" fill="#f08020" stroke="#c45810" />
        <path d="M9 8L18 14L9 20Z" fill="#fff" />
      </svg>
    </button>
    <button type="button" aria-label="Supermium" className="flex w-[66px] items-center justify-center">
      <svg className="size-8" viewBox="0 0 48 40"><Supermium /></svg>
    </button>
    <div className="ml-auto flex items-center">
      <button type="button" aria-label="Show hidden icons">
        <svg className="h-1 w-[7px]" viewBox="0 0 7 4"><path d="M0 4L3.500 0L7 4Z" fill="#fff" /></svg>
      </button>
      <svg className="ml-3 size-4" viewBox="0 0 16 16" aria-hidden="true">
        <path d="M2 1V15" stroke="#fff" strokeWidth="1.500" />
        <path d="M3 3H8L9 5H15L13 7L15 9H8L7 8H3Z" fill="#fff" stroke="#4e627e" strokeWidth="0.5" />
      </svg>
      <svg className="ml-2 size-4" viewBox="0 0 16 16" aria-hidden="true">
        <rect x="4.500" y="3.500" width="11" height="8" fill="#6c84a4" stroke="#fff" />
        <path d="M7 14.500H14M10 12V14M1.500 1V5H4.500V1M3 5V12H6" fill="none" stroke="#fff" />
      </svg>
      <svg className="ml-2 size-4" viewBox="0 0 16 16" aria-hidden="true">
        <path d="M1 5H3L8 1V14L3 10H1Z" fill="#fff" />
        <circle cx="11" cy="11" r="4.500" fill="#d83a34" stroke="#f4b8b4" strokeWidth="0.5" />
        <path d="M9 9L13 13M13 9L9 13" stroke="#fff" strokeWidth="1.500" />
      </svg>
      <time className="ml-4 text-center leading-[17px]">
        <span className="block">11:37 AM</span>
        <span className="block">8/22/2024</span>
      </time>
      <button type="button" aria-label="Show desktop" className="ml-[10px] h-full w-[15px] border-l border-[#46586e] bg-linear-to-br from-[#9fb0c6] to-[#546b88]" />
    </div>
  </footer>
);

const App = () => {
  return (
    <div className="relative flex h-screen flex-col overflow-hidden bg-[#0660c2] font-['Open_Sans',sans-serif] text-[11px] text-[#1e1e1e]">
      <SharedDefs />
      <main className="relative min-h-0 flex-1 overflow-hidden">
        <Wallpaper />
        <Desktop />
        <ExplorerWindow />
      </main>
      <Taskbar />
      <HandCursor />
    </div>
  );
};

export default App;
